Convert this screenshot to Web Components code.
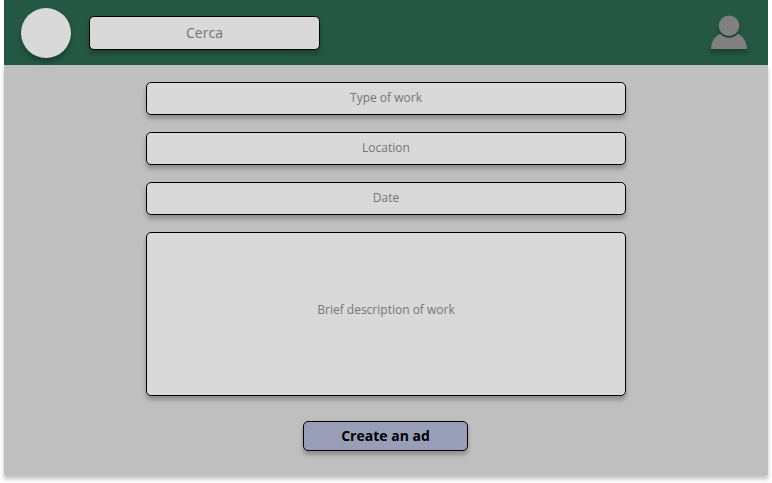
<!DOCTYPE html>
<html lang="en">
<head>
<meta charset="utf-8">
<title>Create an ad</title>
<style>
html,body{margin:0;background:#fff}
body{height:483px;font-family:"Open Sans","Noto Sans",sans-serif;color:#757575}
</style>
</head>
<body>
<ad-page>
  <top-bar slot="header">
    <logo-disc></logo-disc>
    <form-field style="--w:231px;--h:34px;--size:14px">Cerca</form-field>
    <user-icon></user-icon>
  </top-bar>
  <form-field>Type of work</form-field>
  <form-field>Location</form-field>
  <form-field>Date</form-field>
  <form-field style="--h:164px;--lift:8px">Brief description of work</form-field>
  <action-button>Create an ad</action-button>
</ad-page>
<script>
function define(name, markup) {
  customElements.define(name, class extends HTMLElement {
    constructor() {
      super();
      this.attachShadow({ mode: 'open' }).innerHTML = markup;
    }
  });
}
define('ad-page', `<style>
:host{display:flex;flex-direction:column;width:764px;height:475px;margin:0 4px}
main{flex:1;box-sizing:border-box;display:flex;flex-direction:column;align-items:center;gap:17px;padding-top:17px;background:#bfbfbf;box-shadow:0 4px 4px rgba(0,0,0,.25)}
</style><slot name="header"></slot><main><slot></slot></main>`);
define('top-bar', `<style>
:host{display:flex;align-items:center;gap:18px;box-sizing:border-box;height:65px;padding:1px 21px 0 17px;background:#245744}
</style><slot></slot>`);
define('logo-disc', `<style>
:host{display:block;width:50px;height:50px;border-radius:50%;background:#d9d9d9;box-shadow:0 4px 4px rgba(0,0,0,.25)}
</style>`);
define('form-field', `<style>
:host{display:flex;flex:none;align-items:center;justify-content:center;box-sizing:border-box;width:var(--w,480px);height:var(--h,33px);padding-bottom:var(--lift,1px);border:1px solid #000;border-radius:5px;background:#d9d9d9;box-shadow:0 4px 4px rgba(0,0,0,.25);font-size:var(--size,12px);line-height:1.4}
</style><slot></slot>`);
define('user-icon', `<style>
:host{display:block;margin:0 0 2px auto;width:36px;height:34px}
svg{display:block;overflow:visible;filter:drop-shadow(0 4px 2px rgba(0,0,0,.25))}
</style><svg width="36" height="34" viewBox="0 0 36 34" fill="#808080"><circle cx="18" cy="10.7" r="10.3"/><path d="M9 18.8C11.5 21.6 14.5 22.8 18 22.8s6.5-1.2 9-4C32 21.6 36 27 36 34H0C0 27 4 21.6 9 18.8Z"/></svg>`);
define('action-button', `<style>
:host{display:block;margin:8px 1px 0 0}
button{display:flex;align-items:center;justify-content:center;box-sizing:border-box;width:165px;height:30px;padding:0 0 1px;border:1px solid #000;border-radius:5px;background:#999eb8;box-shadow:0 4px 4px rgba(0,0,0,.25);font:700 14px/19px "Open Sans","Noto Sans",sans-serif;color:#000}
</style><button><slot></slot></button>`);
</script>
</body>
</html>
